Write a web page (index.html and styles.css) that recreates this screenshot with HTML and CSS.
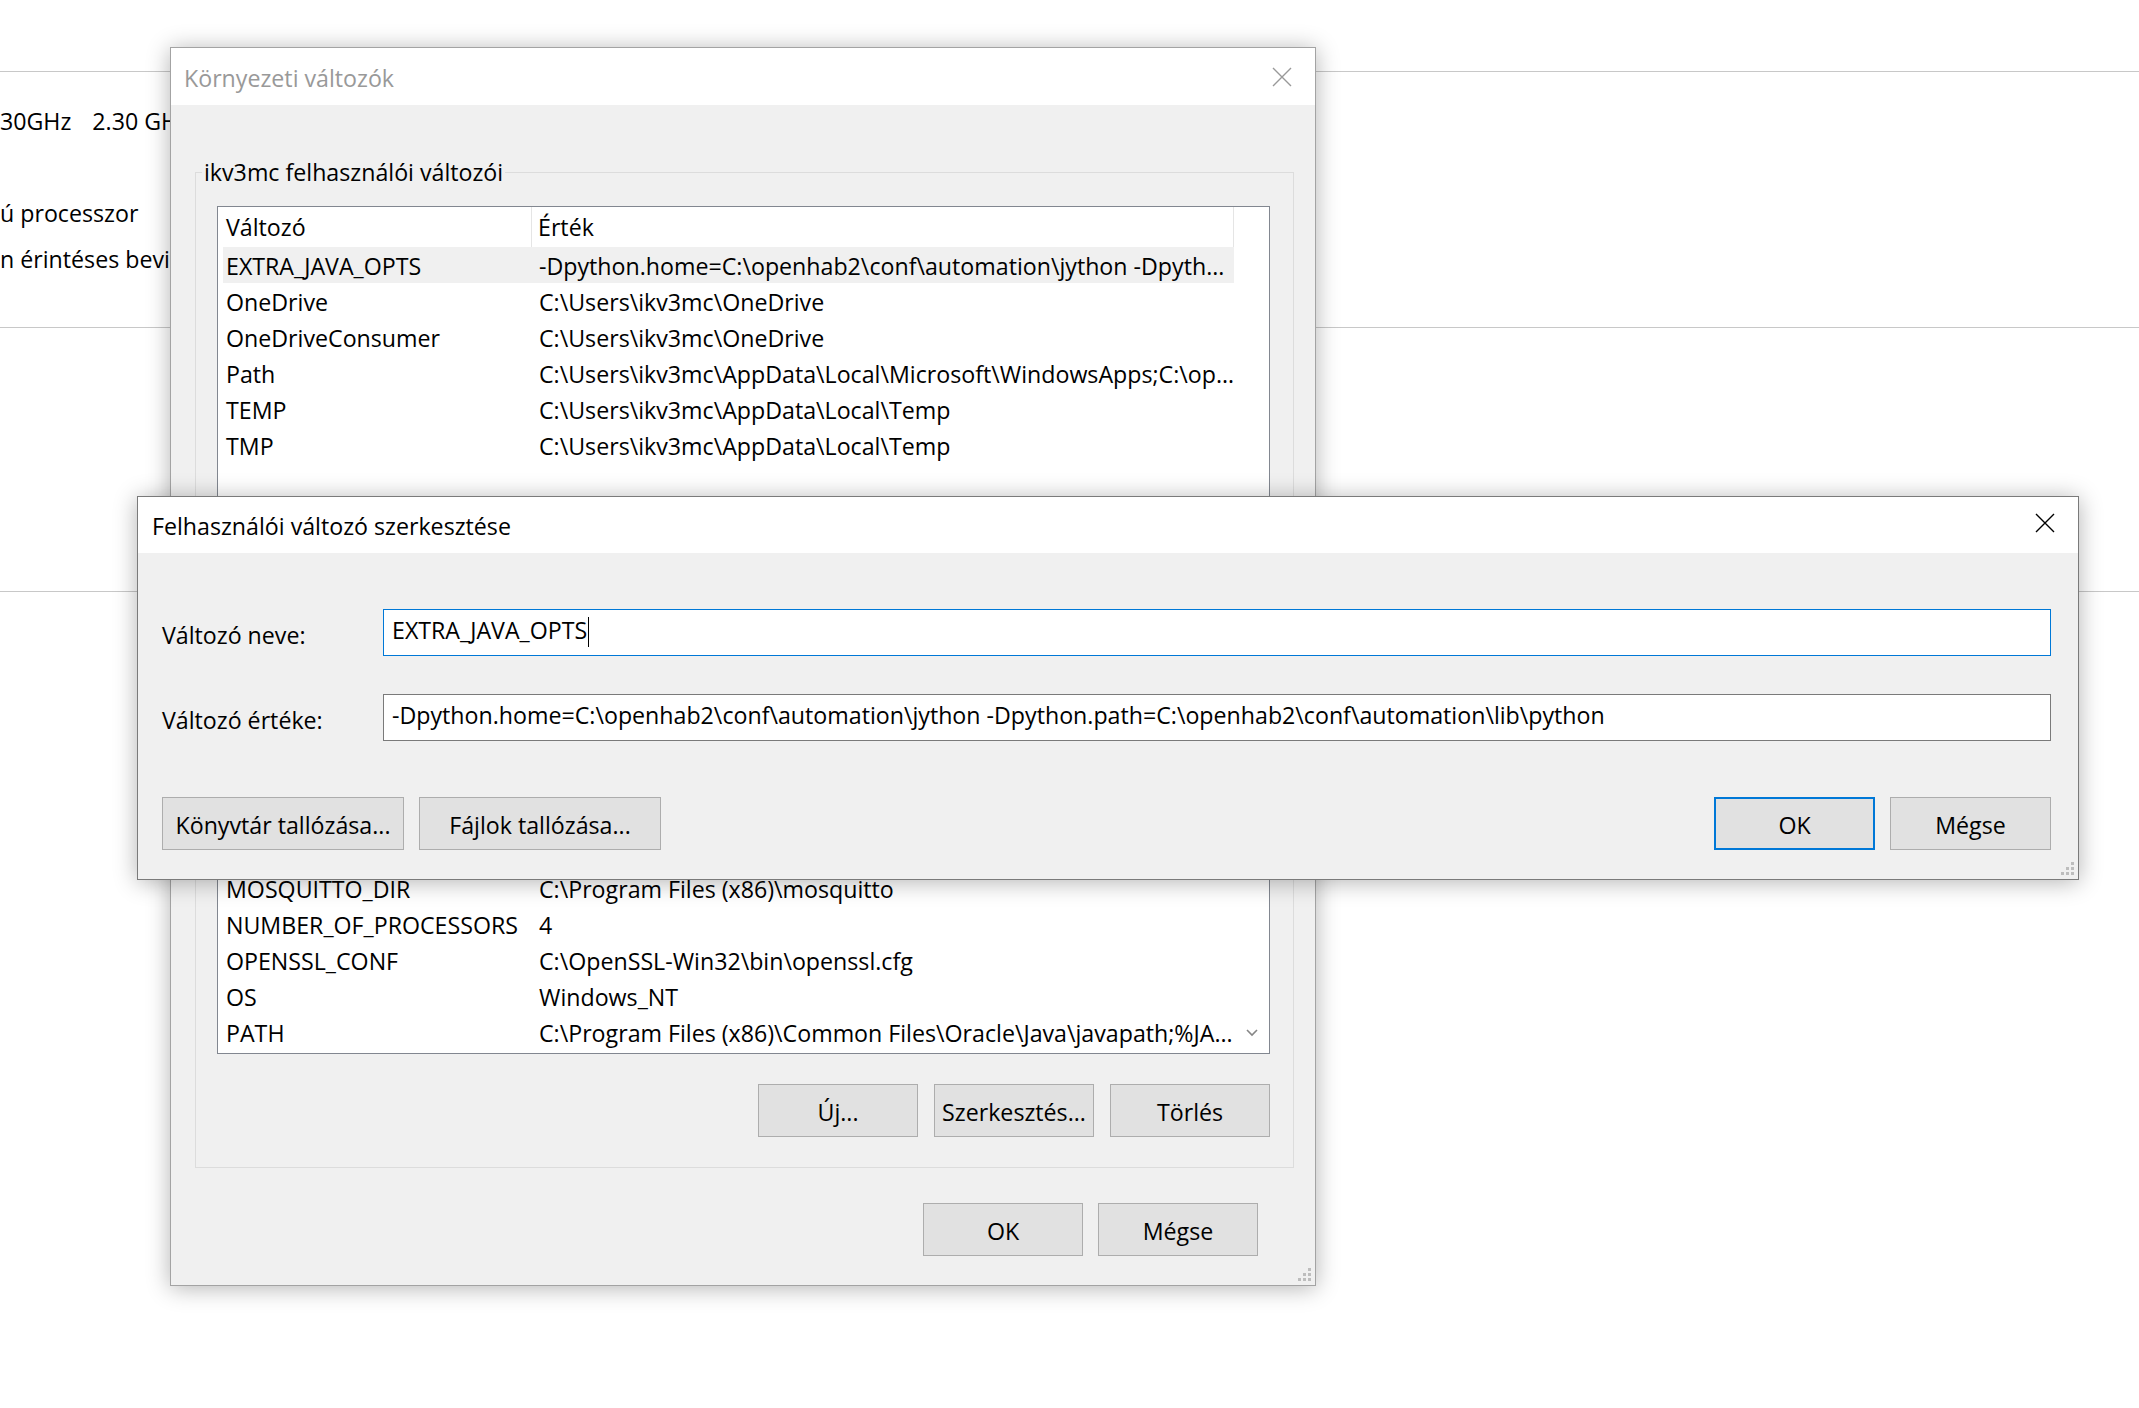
FILE: index.html
```html
<!DOCTYPE html>
<html lang="hu">
<head>
  <meta charset="UTF-8">
  <meta name="viewport" content="width=device-width, initial-scale=1.0">
  <title>Környezeti változók</title>
  <link rel="stylesheet" href="styles.css">
</head>
<body>
  <div class="desktop">
    <!-- settings page behind the dialogs -->
    <section class="about">
      <div class="about-rows">
        <div class="about-row"><span>30GHz</span><span>2.30 GH</span></div>
        <div class="about-row"></div>
        <div class="about-row"><span>ú processzor</span></div>
        <div class="about-row"><span>n érintéses bevit</span></div>
      </div>
      <div class="about-rest"></div>
    </section>

    <!-- Környezeti változók -->
    <div class="window env-window">
      <div class="titlebar inactive">
        <span class="title">Környezeti változók</span>
        <svg class="close" width="20" height="20" viewBox="0 0 20 20"><path d="M1 1 L19 19 M19 1 L1 19"/></svg>
      </div>
      <div class="env-body">
        <fieldset class="group user-group">
          <legend>ikv3mc felhasználói változói</legend>
          <div class="listview user-list">
            <div class="lv-main">
              <div class="lv-head">
                <span class="h1">Változó</span>
                <span class="h2">Érték</span>
              </div>
              <div class="lv-rows">
                <div class="lv-row selected"><span class="c1">EXTRA_JAVA_OPTS</span><span class="c2">-Dpython.home=C:\openhab2\conf\automation\jython -Dpyth...</span></div>
                <div class="lv-row"><span class="c1">OneDrive</span><span class="c2">C:\Users\ikv3mc\OneDrive</span></div>
                <div class="lv-row"><span class="c1">OneDriveConsumer</span><span class="c2">C:\Users\ikv3mc\OneDrive</span></div>
                <div class="lv-row"><span class="c1">Path</span><span class="c2">C:\Users\ikv3mc\AppData\Local\Microsoft\WindowsApps;C:\op...</span></div>
                <div class="lv-row"><span class="c1">TEMP</span><span class="c2">C:\Users\ikv3mc\AppData\Local\Temp</span></div>
                <div class="lv-row"><span class="c1">TMP</span><span class="c2">C:\Users\ikv3mc\AppData\Local\Temp</span></div>
              </div>
            </div>
            <div class="lv-scroll"></div>
          </div>
        </fieldset>

        <fieldset class="group system-group">
          <div class="listview system-list">
            <div class="lv-main">
              <div class="lv-rows bottom">
                <div class="lv-row"><span class="c1">MOSQUITTO_DIR</span><span class="c2">C:\Program Files (x86)\mosquitto</span></div>
                <div class="lv-row"><span class="c1">NUMBER_OF_PROCESSORS</span><span class="c2">4</span></div>
                <div class="lv-row"><span class="c1">OPENSSL_CONF</span><span class="c2">C:\OpenSSL-Win32\bin\openssl.cfg</span></div>
                <div class="lv-row"><span class="c1">OS</span><span class="c2">Windows_NT</span></div>
                <div class="lv-row"><span class="c1">PATH</span><span class="c2">C:\Program Files (x86)\Common Files\Oracle\Java\javapath;%JA...</span></div>
              </div>
            </div>
            <div class="lv-scroll">
              <svg class="chevron" width="12" height="8" viewBox="0 0 12 8"><path d="M1 1 L6 6 L11 1"/></svg>
            </div>
          </div>
          <div class="group-buttons">
            <button class="btn">Új...</button>
            <button class="btn">Szerkesztés...</button>
            <button class="btn">Törlés</button>
          </div>
        </fieldset>

        <div class="dialog-buttons">
          <button class="btn">OK</button>
          <button class="btn">Mégse</button>
        </div>
      </div>
      <svg class="grip" width="16" height="16" viewBox="0 0 16 16">
        <rect x="12" y="2" width="3" height="3"/>
        <rect x="7" y="7" width="3" height="3"/><rect x="12" y="7" width="3" height="3"/>
        <rect x="2" y="12" width="3" height="3"/><rect x="7" y="12" width="3" height="3"/><rect x="12" y="12" width="3" height="3"/>
      </svg>
    </div>

    <!-- Felhasználói változó szerkesztése -->
    <div class="window edit-window">
      <div class="titlebar">
        <span class="title">Felhasználói változó szerkesztése</span>
        <svg class="close" width="20" height="20" viewBox="0 0 20 20"><path d="M1 1 L19 19 M19 1 L1 19"/></svg>
      </div>
      <div class="edit-body">
        <div class="field">
          <label>Változó neve:</label>
          <div class="textbox focused">EXTRA_JAVA_OPTS<span class="caret"></span></div>
        </div>
        <div class="field">
          <label>Változó értéke:</label>
          <div class="textbox">-Dpython.home=C:\openhab2\conf\automation\jython -Dpython.path=C:\openhab2\conf\automation\lib\python</div>
        </div>
        <div class="edit-buttons">
          <div class="btn-group">
            <button class="btn wide">Könyvtár tallózása...</button>
            <button class="btn wide">Fájlok tallózása...</button>
          </div>
          <div class="btn-group">
            <button class="btn small default">OK</button>
            <button class="btn small">Mégse</button>
          </div>
        </div>
      </div>
      <svg class="grip" width="16" height="16" viewBox="0 0 16 16">
        <rect x="12" y="2" width="3" height="3"/>
        <rect x="7" y="7" width="3" height="3"/><rect x="12" y="7" width="3" height="3"/>
        <rect x="2" y="12" width="3" height="3"/><rect x="7" y="12" width="3" height="3"/><rect x="12" y="12" width="3" height="3"/>
      </svg>
    </div>
  </div>
</body>
</html>
```

FILE: styles.css
```css
* {
  box-sizing: border-box;
}

body {
  margin: 0;
  background: #ffffff;
  font-family: "Open Sans", "Noto Sans", Arial, sans-serif;
  font-size: 23.2px;
  color: #000;
}

.desktop {
  position: relative;
  width: 2139px;
  height: 1408px;
  overflow: hidden;
}

/* page behind */
.about {
  margin-top: 71px;
  border-top: 1px solid #c8c8c8;
}

.about-rows {
  padding: 26px 0 45px;
}

.about-row {
  height: 46px;
  display: flex;
  align-items: center;
  gap: 21px;
  white-space: nowrap;
}

.about-rest {
  height: 265px;
  border-top: 1px solid #c8c8c8;
  border-bottom: 1px solid #c8c8c8;
}

/* windows */
.window {
  position: absolute;
  display: flex;
  flex-direction: column;
  background: #f0f0f0;
  box-shadow: 0 2px 22px rgba(0, 0, 0, 0.3);
}

.env-window {
  left: 170px;
  top: 47px;
  width: 1146px;
  border: 1px solid #a3a3a3;
}

.edit-window {
  left: 137px;
  top: 496px;
  width: 1942px;
  border: 1px solid #7a7a7a;
}

.titlebar {
  height: 57px;
  background: #fff;
  display: flex;
  align-items: center;
  justify-content: space-between;
  padding: 0 23px 0 13px;
  white-space: nowrap;
}

.titlebar .title {
  padding-top: 2px;
}

.titlebar .close path {
  stroke: #000;
  stroke-width: 1.4;
  fill: none;
}

.titlebar.inactive .title {
  color: #999;
}

.titlebar.inactive .close path {
  stroke: #999;
}

.edit-window .titlebar {
  height: 56px;
  padding-left: 14px;
}

.edit-window .titlebar .close {
  margin-top: -5px;
}

.grip {
  position: absolute;
  right: 3px;
  bottom: 3px;
  fill: #bdbdbd;
}

/* environment dialog */
.env-body {
  padding: 52px 21px 29px 24px;
}

.group {
  margin: 0;
  min-width: 0;
  border: 1px solid #dcdcdc;
  padding: 19px 23px 30px 21px;
}

.group legend {
  padding: 0 2px;
  margin-left: -15px;
  line-height: 30px;
}

.user-group {
  padding-bottom: 113px;
}

.system-group {
  margin-top: 31px;
  padding-top: 51px;
}

.listview {
  display: flex;
  background: #fff;
  border: 1px solid #828790;
}

.user-list {
  height: 334px;
}

.system-list {
  height: 317px;
}

.lv-main {
  flex: 1;
  min-width: 0;
  display: flex;
  flex-direction: column;
}

.lv-head {
  height: 40px;
  flex-shrink: 0;
  display: flex;
  border-right: 1px solid #e5e5e5;
}

.lv-head span {
  display: flex;
  align-items: center;
}

.lv-head .h1 {
  width: 314px;
  padding-left: 8px;
  border-right: 1px solid #e5e5e5;
}

.lv-head .h2 {
  padding-left: 6px;
}

.lv-rows {
  flex: 1;
  display: flex;
  flex-direction: column;
  overflow: hidden;
}

.lv-rows.bottom {
  justify-content: flex-end;
  padding-bottom: 3px;
}

.lv-row {
  height: 36px;
  flex-shrink: 0;
  margin-left: 5px;
  display: flex;
  align-items: center;
  padding-top: 2px;
  white-space: nowrap;
}

.lv-row.selected {
  background: #f0f0f0;
}

.lv-row .c1 {
  width: 309px;
  flex-shrink: 0;
  padding-left: 3px;
}

.lv-row .c2 {
  flex: 1;
  min-width: 0;
  padding-left: 7px;
  overflow: hidden;
  text-overflow: ellipsis;
}

.lv-scroll {
  width: 35px;
  display: flex;
  align-items: flex-end;
  justify-content: center;
  padding-bottom: 16px;
}

.chevron path {
  stroke: #868686;
  stroke-width: 1.6;
  fill: none;
}

.group-buttons {
  display: flex;
  justify-content: flex-end;
  gap: 16px;
  margin-top: 30px;
}

.dialog-buttons {
  display: flex;
  justify-content: flex-end;
  gap: 15px;
  margin-top: 35px;
  margin-right: 36px;
}

.btn {
  width: 160px;
  height: 53px;
  padding: 2px 0 0;
  background: #e1e1e1;
  border: 1px solid #adadad;
  font: inherit;
  color: #000;
  white-space: nowrap;
}

.btn.wide {
  width: 242px;
}

.btn.small {
  width: 161px;
}

.btn.default {
  border: 2px solid #0078d7;
}

/* edit dialog */
.edit-body {
  padding: 56px 27px 29px 24px;
}

.field {
  display: flex;
  align-items: center;
}

.field + .field {
  margin-top: 38px;
}

.field label {
  width: 221px;
  flex-shrink: 0;
  padding-top: 4px;
}

.textbox {
  flex: 1;
  height: 47px;
  display: flex;
  align-items: center;
  padding: 0 8px 6px;
  background: #fff;
  border: 1px solid #7a7a7a;
  white-space: nowrap;
  overflow: hidden;
}

.textbox.focused {
  border-color: #0078d7;
}

.caret {
  width: 1px;
  height: 30px;
  margin-left: 1px;
  margin-top: 4px;
  background: #000;
}

.edit-buttons {
  display: flex;
  justify-content: space-between;
  margin-top: 56px;
}

.btn-group {
  display: flex;
  gap: 15px;
}
```
